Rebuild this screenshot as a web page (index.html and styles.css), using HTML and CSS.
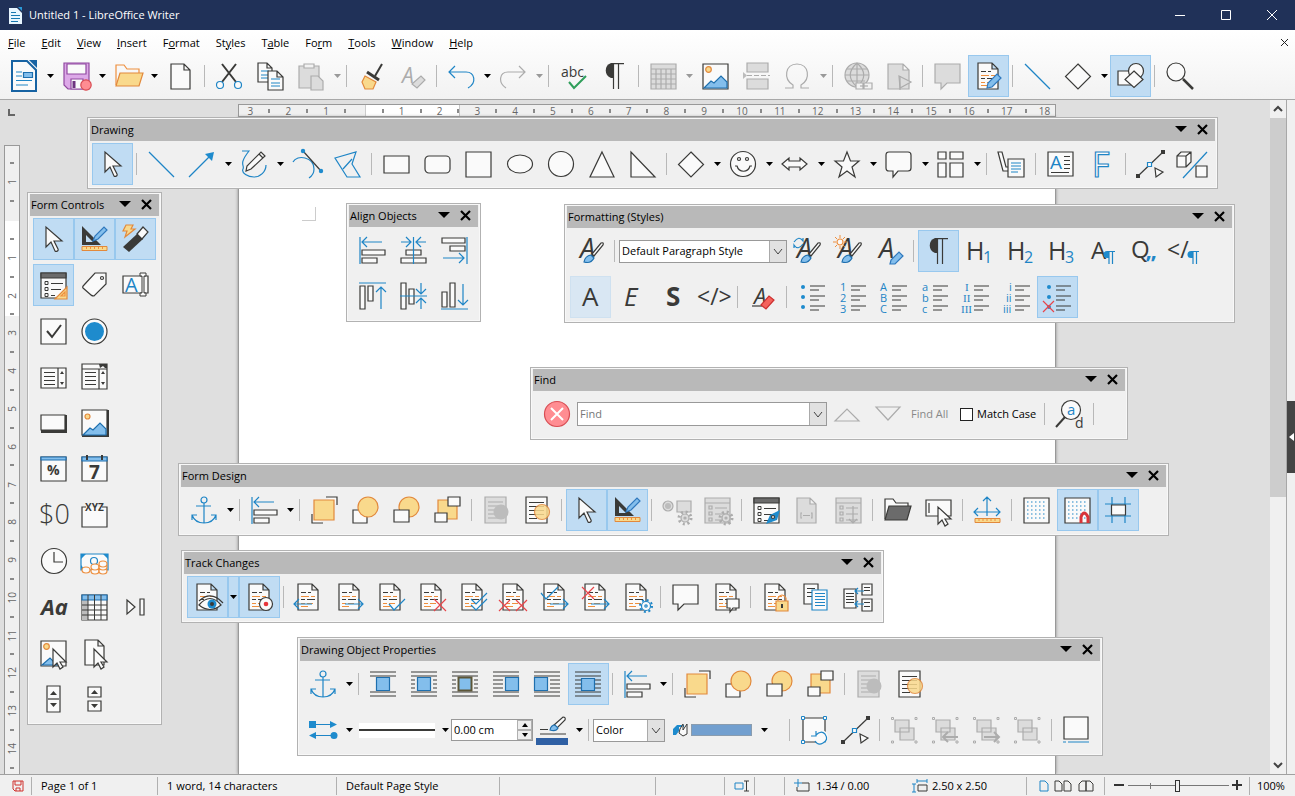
FILE: index.html
```html
<!DOCTYPE html>
<html lang="en">
<head>
<meta charset="utf-8">
<title>Untitled 1 - LibreOffice Writer</title>
<link rel="stylesheet" href="styles.css">
</head>
<body>
<svg class="defs" aria-hidden="true"><defs>
<g id="writer"><path class="navy w" d="M1-2h15l9 9v21H1z"/><path class="navyf" d="M18-3h8v8z"/><path class="b" d="M5 9h6M5 13h6M5 17.500h16M5 22h12"/><path class="bf" d="M12.500 9.500h9v5h-9z"/></g>
<g id="save"><path class="purple" d="M1 0h25v26H5l-4-4z"/><path class="purple w" d="M4 1h19v10H4zM8 16h12v10H8z"/><path class="purpled" d="M11 18v7"/><circle class="red" cx="23" cy="22" r="5.200"/></g>
<g id="open"><path class="o" d="M1 22V2h8l3 4h12v4"/><path class="of" d="M5 10h23l-4 13H1z"/></g>
<g id="doc"><path class="w" d="M4 1h13l6 6v19H4zM17 1v6h6"/></g>
<g id="cut"><path d="M6 1l14 18M20 1L6 19" stroke-width="2"/><circle class="b w" cx="4" cy="22" r="3.500"/><circle class="b w" cx="22" cy="22" r="3.500"/></g>
<g id="copy"><path class="w" d="M1 0h9l5 5v14H1zM10 0v5h5"/><path class="b" d="M4 8h8M4 12h8M4 15h8"/><path class="w" d="M11 8h9l6 6v13H11zM20 8v6h6"/><path class="b" d="M14 16h9M14 20h9M14 23h9"/></g>
<g id="paste"><path class="g" d="M1 3h20v22H1z"/><path class="g w" d="M6 5V1h10v4z"/><path class="g" d="M13 13h7l5 5v9H13z"/></g>
<g id="brush"><path d="M24 1l-7 12" stroke-width="2"/><path d="M9 9l12 8" stroke-width="3"/><path class="of" d="M7 13l11 6-3 7H7L4 19z"/></g>
<g id="clear"><text class="tg it" x="3" y="20" font-size="21">A</text><path class="g" d="M13 21l9-8 4 4-8 8z"/></g>
<g id="undo"><path class="b" d="M7 3L1 9l6 6M1 9h17c9 0 11 11 2 16"/></g>
<g id="redo"><path class="gl" d="M19 3l6 6-6 6M25 9H8C-1 9-2 20 6 25"/></g>
<g id="spell"><text class="tk" x="1" y="14" font-size="14">abc</text><path class="green" d="M9 19l5 6 12-12"/></g>
<g id="pilcrow"><path class="kf" d="M12 0h-2a8 8 0 0 0 0 15h2z"/><path d="M10 .7h13M12.500 0v26M17.500 0v26"/></g>
<g id="gtable"><path class="g" d="M1 1h25v25H1zM1 6h25M1 11h25M1 16h25M1 21h25M6 6v20M11 6v20M16 6v20M21 6v20"/></g>
<g id="image"><path class="w" d="M1 1h25v25H1z"/><circle class="of" cx="6.500" cy="6.500" r="2.800"/><path class="bf" d="M2 25l7-7 3 2 7-7 6 6v6z"/></g>
<g id="break"><path class="g" d="M4 0h21v9H4zM4 16h21v10H4z"/><path class="gl" stroke-dasharray="5 2" d="M4 12.500h23"/><path class="gf" d="M0 9l4 3.500L0 16z"/></g>
<g id="omega"><path class="gl" d="M1 25h8v-3C-1 16 1 1 13 1s14 15 4 21v3h8"/></g>
<g id="globe"><circle class="g" cx="13" cy="12" r="12"/><path class="gl" d="M1 12h24M3 6h20M3 18h18M13 0v24M13 0c-9 8-9 16 0 24M13 0c9 8 9 16 0 24"/><path class="g w" d="M12 20h7v6h-7zM20 20h8v6h-8z"/><path class="gl" d="M16 23h8"/></g>
<g id="docplay"><path class="g" d="M3 1h15l6 6v19H3zM18 1v6h6"/><path class="g" d="M14 13l12 6-11 6z"/><path class="gl" d="M15 13v14"/></g>
<g id="gcomment"><path class="g" d="M1 1h25v19H13l-6 6v-6H1z"/></g>
<g id="dl"><path class="w" d="M3 0h14l6 6v20H3zM17 0v6h6"/><path stroke-width="1" d="M6 8.500h5m2 0h3M6 15.500h4m2 0h8"/><path class="o" stroke-width="1" d="M6 12.500h8m2 0h4M6 19.500h4m2 0h6M6 22.500h7"/></g>
<g id="pencil"><path class="bp" d="M12 25l1-5 9-9 4 4-9 9z"/></g>
<g id="track"><use href="#dl"/><use href="#pencil"/></g>
<g id="line"><path class="b" d="M1 1l25 25"/></g>
<g id="diamond"><path class="w" d="M13 1l12.500 12.500L13 26 .5 13.500z"/></g>
<g id="shapes"><path class="w" d="M1 8h14v14H1z"/><circle class="w" cx="19" cy="8" r="7.500"/><path class="w" d="M17 8l9 8.500-9 8-9-8z"/></g>
<g id="search"><circle class="w" cx="10" cy="9" r="9"/><path d="M17 16l10 10" stroke-width="2.500"/></g>
<g id="select"><path class="w" d="M6 1v20l5-5 4 9c1 1 4 0 3-2l-4-8h8z"/></g>
<g id="arrow"><path class="b" d="M0 26L20 6"/><path class="bs" d="M25 1l-2 9-7-7z"/></g>
<g id="freehand"><path class="b" d="M1 0h7C-3 14 4 14 2 18s5 8 11 8 12-5 12-12"/><path class="w" d="M5 20l1-5L20 1l4 4L10 18zM18 3l4 4"/></g>
<g id="curve"><path class="b" d="M0 11C4 3 21 6 21 18c0 4-2 7-5 9"/><path d="M10 0l18 20"/><circle class="bs" cx="10" cy="0" r="2.200"/><circle class="bs" cx="28" cy="20" r="2.200"/></g>
<g id="polygon"><path class="b" d="M1 7l21-6-4 12 8 13H13zM9 18l9-10"/></g>
<g id="rect"><path class="w" d="M1 5h25v17H1z"/></g>
<g id="rrect"><rect class="w" x="1" y="5" width="25" height="17" rx="4"/></g>
<g id="square"><path class="w" d="M1 1h25v25H1z"/></g>
<g id="ellipse"><ellipse class="w" cx="14" cy="13" rx="12.500" ry="9"/></g>
<g id="circle"><circle class="w" cx="14" cy="13" r="12.500"/></g>
<g id="tri"><path class="w" d="M14 1l12 25H2z"/></g>
<g id="rtri"><path class="w" d="M2 1v25h24z"/></g>
<g id="smiley"><circle class="w" cx="13" cy="13" r="12.500"/><circle cx="9" cy="8" r="1.500"/><circle cx="17" cy="8" r="1.500"/><path d="M5 15h2c2 7 11 7 13 0h2"/></g>
<g id="dblarrow"><path class="w" d="M0 13l7-6v3h11V7l7 6-7 6v-3H7v3z"/></g>
<g id="star"><path class="w" d="M13 1l3.500 9H25l-7 6 3 10-8-6-8 6 3-10-7-6h8.500z"/></g>
<g id="callout"><path class="w" d="M3 1h19q3 0 3 3v13q0 3-3 3H12l-5 6v-6H3q-3 0-3-3V4q0-3 3-3z"/></g>
<g id="flow"><path class="w" d="M0 1h8v7H0zM12 1h13v7H12zM0 12h8v14H0zM12 12h13v14H12z"/></g>
<g id="lcall"><path class="w" d="M0 1h4l4 15h3v4H5z"/><path class="w" d="M10 8h16v18H10z"/><path class="b" d="M13 12h10M13 15h10M13 18h10M13 21h7"/></g>
<g id="textbox"><path class="w" d="M1 1h25v24H1z"/><text class="tb" x="3" y="18" font-size="19">A</text><path stroke-width="1" d="M17 5.500h6M17 9.500h6M17 13.500h6M17 17.500h6M4 21.500h18"/></g>
<g id="fontwork"><text class="tw" x="4" y="26" font-size="34">F</text></g>
<g id="points"><path d="M1 25L26 1"/><path class="kf" d="M-1 23h4v4h-4zM24-1h4v4h-4z"/><path class="b w" d="M10.500 11.500h4v4h-4z"/><path class="w" d="M18 17l8 4-7 5z"/></g>
<g id="extrude"><path class="b" d="M5 27L29 1"/><path class="w" d="M-1 5h9v11h-9zM-1 5l4-4h10v10l-5 5M8 5l5-4M18 15h11v11H18z"/></g>
<g id="design"><path class="kf" fill-rule="evenodd" d="M1 0l19 19H1zM5 9v7h7z"/><path class="bp" d="M12 15l2-5L23 1l3 3-9 9z"/><path class="of" stroke-width="1" d="M1 20.500h25v4H1z"/><path class="o" stroke-width="1" d="M5.500 21v2m4-2v2m4-2v2m4-2v2m4-2v2"/></g>
<g id="wizard"><path class="of" d="M4-1h7L9 3h4L3 11l2-6H1z"/><path class="kf" d="M1 21L15 8l6 5L7 26z"/><path class="w" d="M15 8l6-7 5 5-6 7z"/></g>
<g id="formprop"><path class="w" d="M1 1h25v25H1z"/><path class="kd" d="M1 1h25v5H1z"/><path stroke-width="1" d="M5 9.500h3v3H5zM5 15.500h3v3H5zM5 21.500h3v3H5zM11 11.500h12M11 17.500h10M11 23.500h4"/></g>
<g id="formctl"><use href="#formprop"/><path class="of" d="M15 27h12V15z"/><path class="o" d="M21 24h4v-4z"/></g>
<g id="label"><path class="w" d="M3 13L14 1h11v11L13 24q-2 0-3-1l-8-7q-1-1 1-3z"/><circle cx="21" cy="6" r="1.500"/></g>
<g id="textfield"><path class="w" d="M1 4h25v17H1z"/><text class="tb" x="3" y="20" font-size="20">A</text><path class="w" d="M18 1h6v3h-2v17h2v3h-6v-3h2V4h-2z" stroke-width="1"/></g>
<g id="check"><path class="w" d="M1 1h25v25H1z"/><path d="M7 13l5 6 9-12" stroke-width="2"/></g>
<g id="radio"><circle class="w" cx="13.500" cy="13.500" r="12.500"/><circle class="bs" cx="13.500" cy="13.500" r="9.500"/></g>
<g id="list"><path class="w" d="M1 4h25v20H1zM18 4v20"/><path stroke-width="1" d="M4 8.500h11M4 12.500h11M4 16.500h11M4 20.500h11"/><path class="kf" d="M20 10l2-3 2 3zM20 18h4l-2 3z"/></g>
<g id="combo"><path class="w" d="M1 0h25v25H1zM1 5h25M18 5v20"/><path stroke-width="1" d="M4 8.500h11M4 12.500h11M4 16.500h11M4 20.500h11"/><path class="kf" d="M20 10l2-3 2 3zM20 18h4l-2 3zM18 0h8v4h-2l-2-2-3 2z"/></g>
<g id="pbutton"><path class="kf" d="M1 5h26v18H1z"/><path class="w" d="M1 5h24v15H1z"/></g>
<g id="ibutton"><path class="kf" d="M1 0h27v27H1z"/><path class="w" d="M1 0h25v25H1z"/><circle class="of" cx="6.500" cy="6.500" r="2.500"/><path class="bf" d="M2 25l7-7 3 2 7-7 6 6v6z"/></g>
<g id="percent"><path class="w" d="M1 1h25v24H1z"/><path class="bf" d="M1 1h25v3H1z"/><text class="tk bold" x="7" y="19" font-size="14">%</text></g>
<g id="date"><path class="w" d="M1 1h25v24H1z"/><path class="bf" d="M1 1h25v4H1z"/><path d="M6-1v5M21-1v5" stroke-width="2"/><text class="tk bold" x="8" y="23" font-size="19">7</text></g>
<g id="currency"><text class="tk light" x="-1" y="22" font-size="27">$0</text></g>
<g id="group"><path class="w" d="M5 5H1v20h25V5h-5"/><text class="tk bold" x="4" y="9" font-size="10">XYZ</text></g>
<g id="clock"><circle class="w" cx="14" cy="13" r="12.500"/><path d="M14 4v10h9"/></g>
<g id="money"><path class="b w" d="M0 6h27v16H0z"/><path class="bs" d="M0 6h5l-5 5zM27 6h-5l5 5zM0 22v-5l4 5z"/><circle class="b" cx="13" cy="13" r="3.500"/><g class="o cw"><ellipse cx="5" cy="22" rx="4" ry="3"/><ellipse cx="14" cy="23" rx="4" ry="3"/><ellipse cx="14" cy="19" rx="4" ry="3"/><ellipse cx="22" cy="23" rx="4" ry="3"/><ellipse cx="22" cy="19" rx="4" ry="3"/><ellipse cx="22" cy="16" rx="4" ry="3"/></g></g>
<g id="pattern"><text class="tk bold it" x="1" y="21" font-size="22">Aa</text></g>
<g id="grid"><path class="w" d="M1 1h25v25H1z"/><path class="gf" d="M1 6h6v20H1z"/><path class="bf" d="M1 1h25v5H1z"/><path stroke-width="1" d="M1 11h25M1 16h25M1 21h25M7 1v25M13.500 1v25M20 1v25"/></g>
<g id="nav"><path class="w" d="M5 6l8 7-8 7zM18 5h4v16h-4z"/></g>
<g id="imgctl"><path class="w" d="M1 1h25v25H1z"/><circle class="of" cx="6.500" cy="6.500" r="2.800"/><path class="bf" d="M2 25l8-7 7 7z"/><path class="w" d="M13 9v18l4-4 3 6 3-2-3-5h6z"/></g>
<g id="filectl"><path class="w" d="M4 0h13l6 6v19H4zM17 0v6h6"/><path class="w" d="M13 9v18l4-4 3 6 3-2-3-5h6z"/></g>
<g id="spinbtn"><path class="w" d="M7 0h13v26H7z"/><path d="M8 13h11"/><path class="kf" d="M10 9h7l-3.500-4zM10 17h7l-3.500 4z"/></g>
<g id="scrollbtn"><path class="w" d="M7 1h13v10H7zM7 15h13v10H7z"/><path class="kf" d="M10 8h7l-3.500-4zM10 18h7l-3.500 4z"/></g>
<g id="aleft"><path class="b" d="M1 0v27M23 5H3M8 0L3 5l5 5"/><path class="w" d="M3 13h23v5H3zM3 21h15v5H3z"/></g>
<g id="acenter"><path class="w" d="M6 13h15v5H6zM1 21h25v5H1z"/><path class="b" d="M13.500 0v27M1 5h9M6 0l5 5-5 5M26 5h-9M21 0l-5 5 5 5"/></g>
<g id="aright"><path class="b" d="M26 0v27M2 21h21M18 16l5 5-5 5"/><path class="w" d="M1 1h23v5H1zM9 9h15v5H9z"/></g>
<g id="atop"><path class="b" d="M0 0h27M22 26V4M17 9l5-5 5 5"/><path class="w" d="M1 3h5v23H1zM9 3h5v15H9z"/></g>
<g id="amiddle"><path class="w" d="M1 0h5v26H1zM9 6h5v15H9z"/><path class="b" d="M0 13h27M21 0v11M16 6l5 5 5-5M21 26V16M16 20l5-5 5 5"/></g>
<g id="abottom"><path class="b" d="M0 26h27M22 1v21M17 17l5 5 5-5"/><path class="w" d="M1 9h5v15H1zM9 0h5v24H9z"/></g>
<g id="bbrush"><path class="w" d="M15 16L24 5q3-1 2 2l-9 11z"/><path class="bf" d="M7 24q1-6 7-7l3 3q-3 6-10 4z"/></g>
<g id="stylea"><text class="tk it" x="3" y="20" font-size="27">A</text></g>
<g id="style"><use href="#stylea"/><use href="#bbrush"/></g>
<g id="styleup"><use href="#stylea"/><use href="#bbrush"/><path class="b" d="M0 4q5-7 9-1V0M9 6q-5 7-9 1v3"/></g>
<g id="stylenew"><use href="#stylea"/><use href="#bbrush"/><circle class="o w" cx="5" cy="4" r="3"/><path class="o" stroke-width="1" d="M5-3v3M5 8v3M-2 4h3M9 4h3M0-1l2 2M8 7l2 2M10-1L8 1M0 9l2-2"/></g>
<g id="styleedit"><use href="#stylea"/><path class="bp" d="M14 26l1-4 8-8 4 4-8 8z"/></g>
<g id="h1"><text class="tk" x="0" y="22" font-size="25">H</text><text class="tb" x="17" y="25" font-size="16">1</text></g>
<g id="h2"><text class="tk" x="0" y="22" font-size="25">H</text><text class="tb" x="17" y="25" font-size="16">2</text></g>
<g id="h3"><text class="tk" x="0" y="22" font-size="25">H</text><text class="tb" x="17" y="25" font-size="16">3</text></g>
<g id="bpil"><path class="bs" d="M20 13h-2a3.500 3.500 0 0 0 0 7h2z"/><path class="b" d="M18 13.500h8M20 13v13M23.500 13v13"/></g>
<g id="apil"><text class="tk" x="2" y="21" font-size="24">A</text><use href="#bpil"/></g>
<g id="quote"><text class="tk" x="1" y="20" font-size="24">Q</text><text class="tb bold" x="16" y="33" font-size="22">”</text></g>
<g id="codepil"><text class="tk" x="-4" y="20" font-size="23">&lt;/</text><use href="#bpil" x="2"/></g>
<g id="ca"><text class="tk" x="5" y="22" font-size="26">A</text></g>
<g id="ce"><text class="tk it" x="6" y="22" font-size="26">E</text></g>
<g id="cs"><text class="tk bold" x="7" y="22" font-size="26">S</text></g>
<g id="code"><text class="tk" x="-3" y="21" font-size="23">&lt;/&gt;</text></g>
<g id="erase"><text class="tk it" x="5" y="20" font-size="22">A</text><path d="M3 22h10"/><path class="rf" d="M12 21l8-9 5 4-8 9z"/></g>
<g id="lines"><path d="M12 2h15M12 6h9M12 12h15M12 16h9M12 22h15M12 26h9"/></g>
<g id="bul"><use href="#lines"/><circle class="bs" cx="5" cy="3" r="2"/><circle class="bs" cx="5" cy="13" r="2"/><circle class="bs" cx="5" cy="23" r="2"/></g>
<g id="num"><use href="#lines"/><text class="tb" font-size="11"><tspan x="1" y="7">1</tspan><tspan x="1" y="18">2</tspan><tspan x="1" y="29">3</tspan></text></g>
<g id="upa"><use href="#lines"/><text class="tb" font-size="11"><tspan x="0" y="7">A</tspan><tspan x="0" y="18">B</tspan><tspan x="0" y="29">C</tspan></text></g>
<g id="lowa"><use href="#lines"/><text class="tb" font-size="11"><tspan x="1" y="7">a</tspan><tspan x="1" y="18">b</tspan><tspan x="1" y="29">c</tspan></text></g>
<g id="upi"><use href="#lines"/><text class="tb serif" font-size="11"><tspan x="3" y="7">I</tspan><tspan x="1" y="18">II</tspan><tspan x="-1" y="29">III</tspan></text></g>
<g id="lowi"><use href="#lines"/><text class="tb" font-size="11"><tspan x="6" y="7">i</tspan><tspan x="3" y="18">ii</tspan><tspan x="0" y="29">iii</tspan></text></g>
<g id="nolist"><use href="#bul"/><path class="r" d="M-1 17l11 11M10 17L-1 28"/></g>
<g id="closefind"><circle class="red" cx="14" cy="13" r="12.500"/><path class="white" d="M8 7l12 12M20 7L8 19"/></g>
<g id="up"><path class="gl" d="M1 20h24L13 8z"/></g>
<g id="down"><path class="gl" d="M1 6h24L13 19z"/></g>
<g id="findrep"><circle class="w" cx="15" cy="9" r="9.500"/><path d="M9 16L0 26" stroke-width="2"/><text class="tb" x="11" y="14" font-size="15">a</text><text class="tk" x="19" y="27" font-size="14">d</text></g>
<g id="anchor"><circle class="b" cx="13" cy="3" r="3"/><path class="b" d="M13 6v20M5 9h15M1 18q3 8 12 8t12-8M1 23v-5h5M25 23v-5h-5"/></g>
<g id="front"><path class="w" d="M15 0h11v8M1 17v9h11"/><path class="of" d="M3 3h20v20H3z"/></g>
<g id="fwd"><path class="w" d="M1 13h14v13H1z"/><circle class="of" cx="16" cy="10" r="10"/></g>
<g id="back"><circle class="of" cx="16" cy="10" r="10"/><path class="w" d="M1 13h15v12H1z"/></g>
<g id="toback"><path class="of" d="M4 3h19v19H4z"/><path class="w" d="M14 0h12v9H14zM1 16h12v9H1z"/></g>
<g id="gfore"><path class="g" d="M2 0h21v26H2z"/><path class="gl" d="M5 5h15M5 9h15M5 13h15M5 17h15M5 21h15"/><circle class="gf" cx="18" cy="15" r="7.500"/></g>
<g id="fore"><path class="w" d="M2 0h21v26H2z"/><path stroke-width="1" d="M5 5.500h15M5 9.500h15M5 13.500h15M5 17.500h15M5 21.500h8"/><circle class="of" opacity=".85" cx="18" cy="15" r="7.500"/></g>
<g id="ggear"><circle class="g" cx="22" cy="21" r="4"/><circle class="gl" stroke-dasharray="2 2.700" stroke-width="3" cx="22" cy="21" r="6"/><circle class="gl" cx="22" cy="21" r="1"/></g>
<g id="gctl"><circle class="g" cx="5" cy="9" r="5"/><circle class="gf" cx="5" cy="9" r="3"/><path class="g" d="M14 4h14v11H14z"/><use href="#ggear"/></g>
<g id="gformb"><path class="g" d="M1 1h25v25H1zM1 6h25M5 9h3v3H5zM5 15h3v3H5zM5 21h3v3H5zM11 11h12M11 17h12M11 23h12"/></g>
<g id="gform"><use href="#gformb"/><use href="#ggear"/></g>
<g id="navig"><use href="#formprop"/><path class="bs" d="M13 27l4-9 10-5-3 10z"/><circle class="w" cx="20" cy="20" r="1.500"/></g>
<g id="gdoc"><path class="g" d="M3 1h13l6 6v19H3zM16 1v6h6M8 16h-1v5h1M17 16h1v5h-1M9 18.500h7"/></g>
<g id="gsort"><use href="#gformb"/><path class="gl" d="M18 9v17M14 22l4 4 4-4"/></g>
<g id="folder"><path class="w" d="M1 22V2h8l3 4h12v4"/><path class="kd" d="M5 9h22l-4 14H1z"/></g>
<g id="autoctl"><path class="w" d="M1 3h25v16H1zM4 6v10"/><path class="w" d="M13 10v17l4-4 3 6 3-2-3-5h6z"/></g>
<g id="position"><path class="b" d="M13 0v19M0 15h26M9 4l4-4 4 4M4 11l-4 4 4 4M22 11l4 4-4 4"/><path class="of" stroke-width="1" d="M1 21.500h25v4H1z"/><path class="o" stroke-width="1" d="M5 22v2m4-2v2m4-2v2m4-2v2m4-2v2"/></g>
<g id="dots"><path class="w" d="M1 1h25v25H1z"/><path class="b" stroke-dasharray="1.500 2.500" d="M4 5h20M4 9h20M4 13h20M4 17h20M4 21h20"/></g>
<g id="snap"><use href="#dots"/><path class="mag" d="M17 26v-6q3-8 7 0v6"/></g>
<g id="guides"><path class="b" d="M7 0v26M20 0v26M0 7h26M0 19h26"/><path class="w" d="M6.500 8h14v10h-14z"/></g>
<g id="show"><use href="#dl"/><path class="w" d="M5 21q11-13 22 0-11 9-22 0z"/><path d="M5 17q12-11 24 2"/><circle class="bs" cx="18" cy="20" r="4.500"/><circle class="kf" cx="18" cy="20" r="2"/></g>
<g id="record"><use href="#dl"/><circle class="w" cx="20" cy="20" r="6.500"/><circle class="redf" cx="20" cy="20" r="2.300"/></g>
<g id="prev"><use href="#dl"/><path class="b" d="M-1 20h18M4 15l-5 5 5 5"/></g>
<g id="next"><use href="#dl"/><path class="b" d="M9 20h18M22 15l5 5-5 5"/></g>
<g id="accept"><use href="#dl"/><path class="b" d="M12 20l5 6 11-11"/></g>
<g id="reject"><use href="#dl"/><path class="r" d="M16 15l12 12M28 15L16 27"/></g>
<g id="acceptall"><use href="#dl"/><path class="b" d="M12 15l5 5L28 9M12 21l5 5 11-11"/></g>
<g id="rejectall"><use href="#dl"/><path class="r" d="M-1 16l11 11M10 16L-1 27M16 16l11 11M27 16L16 27"/></g>
<g id="acceptnext"><use href="#next"/><path class="b" d="M0 9l5 6L17 3"/></g>
<g id="rejectnext"><use href="#next"/><path class="r" d="M0 3l12 12M12 3L0 15"/></g>
<g id="manage"><use href="#dl"/><circle class="b w" cx="23" cy="22" r="4.500"/><circle class="b" stroke-width="2" stroke-dasharray="2 2.700" cx="23" cy="22" r="6"/><circle class="b" cx="23" cy="22" r="1.200"/></g>
<g id="comment"><path class="w" d="M1 1h25v19H12l-6 6v-6H1z"/></g>
<g id="doccomment"><use href="#dl"/><path class="w" d="M14 15h12v9h-6l-3 4v-4h-3z"/></g>
<g id="lock"><use href="#dl"/><path class="o" d="M16 18v-4q4-6 8 0v4"/><path class="of" d="M14 17h12v10H14z"/><path d="M20 20v4" stroke-width="2"/></g>
<g id="compare"><path class="w" d="M1 0h14v20H1z"/><path stroke-width="1" d="M4 4.500h8M4 8.500h8M4 12.500h8"/><path class="b w" d="M9 6h15v20H9z"/><path class="b" stroke-width="1" d="M12 9.500h10M12 12.500h10M12 15.500h10M12 18.500h10M12 21.500h10"/></g>
<g id="merge"><path class="w" d="M0 5h12v19H0zM18 0h10v11H18zM18 15h10v12H18z"/><path stroke-width="1" d="M2 9.500h8M2 12.500h8M2 15.500h8M2 18.500h8M20 3.500h6M20 6.500h6M20 18.500h6M20 22.500h6"/><path class="b" d="M20 7h-9M14 4l-3 3 3 3M20 20h-9M14 17l-3 3 3 3"/></g>
<g id="rows"><path d="M0 1h26M0 5h26M0 21h26M0 25h26"/></g>
<g id="wnone"><use href="#rows"/><path class="bf" d="M6.500 6.500h13v13h-13z"/></g>
<g id="wpar"><use href="#rows"/><path d="M0 9h4M0 13h4M0 17h4M22 9h4M22 13h4M22 17h4"/><path class="bf" d="M6.500 6.500h13v13h-13z"/></g>
<g id="wopt"><use href="#rows"/><path d="M0 9h4M0 13h4M0 17h4M22 9h4M22 13h4M22 17h4"/><path class="bf kb" d="M6.500 6.500h13v13h-13z"/></g>
<g id="wbefore"><use href="#rows"/><path d="M0 9h10M0 13h10M0 17h10"/><path class="bf" d="M12.500 6.500h13v13h-13z"/></g>
<g id="wafter"><use href="#rows"/><path d="M16 9h10M16 13h10M16 17h10"/><path class="bf" d="M.5 6.500h13v13H.5z"/></g>
<g id="wthrough"><path d="M0 1h26M0 5h26M0 9h26M0 13h26M0 17h26M0 21h26M0 25h26"/><path class="bf" d="M6.500 7.500h13v12h-13z"/></g>
<g id="ends"><path class="bs" d="M-1 4h7v7h-7zM20 4l7 3.500-7 3.500zM6 15l-7 3.500L6 22z"/><path class="b" d="M5 7.500h17M3 18.500h20"/><circle class="bs" cx="24" cy="18.500" r="3.500"/></g>
<g id="linecolor"><path d="M0 12.500h8M0 17h26"/><path class="w" d="M14 8L23 0q3 0 2 3l-8 8z"/><path class="bf" d="M10 13q1-5 5-5l3 3q-2 4-8 2z"/><path class="barf" d="M-4 21h32v7H-4z"/></g>
<g id="fill"><path class="bs" d="M0 8l4-4h7v2H6v4l-3 4H0z"/><path class="w" stroke-width="1" d="M7 8l3-5v6l4-6v10l-4 2-4-3z"/></g>
<g id="rotate"><path class="w" d="M2 1h22v24H2z"/><path class="b w" stroke-width="1" d="M.5-.5h3v3h-3zM22.500-.5h3v3h-3zM.5 23.500h3v3h-3z"/><circle class="w0" cx="20" cy="20" r="7"/><path class="b" d="M15 14v5h-5M15 18q5-5 9-1 4 6-2 9-5 3-8-2"/></g>
<g id="ggroup"><path class="g" d="M4 3h14v12H4zM9 11h14v12H9z"/><path class="gl" stroke-width="1" d="M.5.5h2v2h-2zM24 .5h2v2h-2zM.5 24h2v2h-2zM24 24h2v2h-2z"/></g>
<g id="genter"><use href="#ggroup"/><path class="gl" stroke-width="2" d="M26 20H11M16 15l-5 5 5 5"/></g>
<g id="gexit"><use href="#ggroup"/><path class="gl" stroke-width="2" d="M11 20h15M21 15l5 5-5 5"/></g>
<g id="shadow"><path class="w" d="M1 0h24v22H1z"/><path class="b" d="M0 25h3m2 0h21"/></g>
<g id="dda"><path class="blackf" d="M0 0h7L3.500 4z"/></g>
<g id="ddg"><path class="gf2" d="M0 0h7L3.500 4z"/></g>
<g id="tda"><path class="blackf" d="M0 0h12L6 6z"/></g>
<g id="tdx"><path class="blackx" d="M1 1l9 9M10 1L1 10"/></g>
<g id="chev"><path d="M1 1l4 5 4-5"/></g>
</defs></svg>

<header class="titlebar">
  <svg class="appicon" aria-hidden="true"><path fill="#e8f6ff" d="M0 1h8l5 5v11H0z"/><path fill="#2a9ad8" d="M9 0h4v4z"/><path stroke="#1878b0" d="M2 5.500h5M2 8.500h9M2 11.500h9M2 14.500h7"/></svg>
  <h1>Untitled 1 - LibreOffice Writer</h1>
  <div class="winbtns">
    <button aria-label="Minimize"><svg><path d="M0 5.500h10"/></svg></button>
    <button aria-label="Maximize"><svg><path d="M.5.5h9v9h-9z"/></svg></button>
    <button aria-label="Close"><svg><path d="M0 0l10 10M10 0L0 10"/></svg></button>
  </div>
</header>
<div class="chrome">
<nav class="menubar">
  <button><u>F</u>ile</button><button><u>E</u>dit</button><button><u>V</u>iew</button><button><u>I</u>nsert</button><button>F<u>o</u>rmat</button><button>St<u>y</u>les</button><button>T<u>a</u>ble</button><button>Fo<u>r</u>m</button><button><u>T</u>ools</button><button><u>W</u>indow</button><button><u>H</u>elp</button>
  <button class="closedoc" aria-label="Close document"><svg><path d="M1 1l7 7M8 1L1 8"/></svg></button>
</nav>
<div class="bar main" role="toolbar" aria-label="Standard">
  <button class="btn" title="New"><svg class="ico"><use href="#writer"/></svg></button><button class="dd" title="New options"><svg><use href="#dda"/></svg></button>
  <button class="btn" title="Save"><svg class="ico"><use href="#save"/></svg></button><button class="dd" title="Save options"><svg><use href="#dda"/></svg></button>
  <button class="btn" title="Open"><svg class="ico"><use href="#open"/></svg></button><button class="dd" title="Open options"><svg><use href="#dda"/></svg></button>
  <button class="btn" title="Blank document"><svg class="ico"><use href="#doc"/></svg></button><i class="sep"></i>
  <button class="btn" title="Cut"><svg class="ico"><use href="#cut"/></svg></button>
  <button class="btn" title="Copy"><svg class="ico"><use href="#copy"/></svg></button>
  <button class="btn" title="Paste"><svg class="ico"><use href="#paste"/></svg></button><button class="dd" title="Paste options"><svg><use href="#ddg"/></svg></button><i class="sep"></i>
  <button class="btn" title="Clone formatting"><svg class="ico"><use href="#brush"/></svg></button>
  <button class="btn" title="Clear formatting"><svg class="ico"><use href="#clear"/></svg></button><i class="sep"></i>
  <button class="btn" title="Undo"><svg class="ico"><use href="#undo"/></svg></button><button class="dd" title="Undo list"><svg><use href="#dda"/></svg></button>
  <button class="btn" title="Redo"><svg class="ico"><use href="#redo"/></svg></button><button class="dd" title="Redo list"><svg><use href="#ddg"/></svg></button><i class="sep"></i>
  <button class="btn" title="Spelling"><svg class="ico"><use href="#spell"/></svg></button>
  <button class="btn" title="Formatting marks"><svg class="ico"><use href="#pilcrow"/></svg></button><i class="sep"></i>
  <button class="btn" title="Insert table"><svg class="ico"><use href="#gtable"/></svg></button><button class="dd" title="Table size"><svg><use href="#ddg"/></svg></button>
  <button class="btn" title="Insert image"><svg class="ico"><use href="#image"/></svg></button>
  <button class="btn" title="Insert page break"><svg class="ico"><use href="#break"/></svg></button>
  <button class="btn" title="Special character"><svg class="ico"><use href="#omega"/></svg></button><button class="dd" title="Characters"><svg><use href="#ddg"/></svg></button><i class="sep"></i>
  <button class="btn" title="Hyperlink"><svg class="ico"><use href="#globe"/></svg></button>
  <button class="btn" title="Cross-reference"><svg class="ico"><use href="#docplay"/></svg></button><i class="sep"></i>
  <button class="btn" title="Comment"><svg class="ico"><use href="#gcomment"/></svg></button>
  <button class="btn on" title="Track changes functions"><svg class="ico"><use href="#track"/></svg></button><i class="sep"></i>
  <button class="btn" title="Line"><svg class="ico"><use href="#line"/></svg></button>
  <button class="btn" title="Basic shapes"><svg class="ico"><use href="#diamond"/></svg></button><button class="dd" title="More shapes"><svg><use href="#dda"/></svg></button>
  <button class="btn on" title="Draw functions"><svg class="ico"><use href="#shapes"/></svg></button><i class="sep"></i>
  <button class="btn" title="Find and replace"><svg class="ico"><use href="#search"/></svg></button>
</div>
</div>

<main class="workspace">
  <div class="vside">
    <svg class="corner" aria-hidden="true"><path d="M1 0v6h6"/></svg>
    <div class="vruler"><div class="vscale"><i></i><b>1</b><i></i><b></b><i></i><b>1</b><i></i><b>2</b><i></i><b>3</b><i></i><b>4</b><i></i><b>5</b><i></i><b>6</b><i></i><b>7</b><i></i><b>8</b><i></i><b>9</b><i></i><b>10</b><i></i><b>11</b><i></i><b>12</b><i></i><b>13</b><i></i><b>14</b><i></i></div></div>
  </div>
  <div class="canvas">
    <div class="hruler"><b>3</b><i></i><b>2</b><i></i><b>1</b><i></i><b></b><i></i><b>1</b><i></i><b>2</b><i></i><b>3</b><i></i><b>4</b><i></i><b>5</b><i></i><b>6</b><i></i><b>7</b><i></i><b>8</b><i></i><b>9</b><i></i><b>10</b><i></i><b>11</b><i></i><b>12</b><i></i><b>13</b><i></i><b>14</b><i></i><b>15</b><i></i><b>16</b><i></i><b>17</b><i></i><b>18</b></div>
    <div class="page"><div class="margin-mark"></div></div>
  </div>
  <div class="scroll"><button aria-label="Scroll up"><svg><path d="M1 6l4-4 4 4"/></svg></button><div class="thumb"></div><button aria-label="Scroll down"><svg><path d="M1 2l4 4 4-4"/></svg></button></div>
  <div class="side"><button aria-label="Show sidebar"><svg><path d="M6 0v8L1 4z"/></svg></button></div>

  <section class="panel drawing">
    <header><h2>Drawing</h2><button aria-label="Menu"><svg><use href="#tda"/></svg></button><button aria-label="Close"><svg><use href="#tdx"/></svg></button></header>
    <div class="bar">
      <button class="btn on" title="Select"><svg class="ico"><use href="#select"/></svg></button><i class="sep"></i>
      <button class="btn" title="Line"><svg class="ico"><use href="#line"/></svg></button>
      <button class="btn" title="Arrow"><svg class="ico"><use href="#arrow"/></svg></button><button class="dd" title="Lines"><svg><use href="#dda"/></svg></button>
      <button class="btn" title="Freeform"><svg class="ico"><use href="#freehand"/></svg></button><button class="dd" title="Curves"><svg><use href="#dda"/></svg></button>
      <button class="btn" title="Curve"><svg class="ico"><use href="#curve"/></svg></button>
      <button class="btn" title="Polygon"><svg class="ico"><use href="#polygon"/></svg></button><i class="sep"></i>
      <button class="btn" title="Rectangle"><svg class="ico"><use href="#rect"/></svg></button>
      <button class="btn" title="Rounded rectangle"><svg class="ico"><use href="#rrect"/></svg></button>
      <button class="btn" title="Square"><svg class="ico"><use href="#square"/></svg></button>
      <button class="btn" title="Ellipse"><svg class="ico"><use href="#ellipse"/></svg></button>
      <button class="btn" title="Circle"><svg class="ico"><use href="#circle"/></svg></button>
      <button class="btn" title="Triangle"><svg class="ico"><use href="#tri"/></svg></button>
      <button class="btn" title="Right triangle"><svg class="ico"><use href="#rtri"/></svg></button><i class="sep"></i>
      <button class="btn" title="Basic shapes"><svg class="ico"><use href="#diamond"/></svg></button><button class="dd" title="More"><svg><use href="#dda"/></svg></button>
      <button class="btn" title="Symbol shapes"><svg class="ico"><use href="#smiley"/></svg></button><button class="dd" title="More"><svg><use href="#dda"/></svg></button>
      <button class="btn" title="Block arrows"><svg class="ico"><use href="#dblarrow"/></svg></button><button class="dd" title="More"><svg><use href="#dda"/></svg></button>
      <button class="btn" title="Stars"><svg class="ico"><use href="#star"/></svg></button><button class="dd" title="More"><svg><use href="#dda"/></svg></button>
      <button class="btn" title="Callouts"><svg class="ico"><use href="#callout"/></svg></button><button class="dd" title="More"><svg><use href="#dda"/></svg></button>
      <button class="btn" title="Flowchart"><svg class="ico"><use href="#flow"/></svg></button><button class="dd" title="More"><svg><use href="#dda"/></svg></button><i class="sep"></i>
      <button class="btn" title="Line callout"><svg class="ico"><use href="#lcall"/></svg></button><i class="sep"></i>
      <button class="btn" title="Text box"><svg class="ico"><use href="#textbox"/></svg></button>
      <button class="btn" title="Fontwork"><svg class="ico"><use href="#fontwork"/></svg></button><i class="sep"></i>
      <button class="btn" title="Points"><svg class="ico"><use href="#points"/></svg></button>
      <button class="btn" title="Extrusion"><svg class="ico"><use href="#extrude"/></svg></button>
    </div>
  </section>

  <section class="panel controls">
    <header><h2>Form Controls</h2><button aria-label="Menu"><svg><use href="#tda"/></svg></button><button aria-label="Close"><svg><use href="#tdx"/></svg></button></header>
    <div class="bar grid3">
      <button class="btn on" title="Select"><svg class="ico"><use href="#select"/></svg></button>
      <button class="btn on" title="Design mode"><svg class="ico"><use href="#design"/></svg></button>
      <button class="btn on" title="Wizards"><svg class="ico"><use href="#wizard"/></svg></button>
      <button class="btn on" title="Form design"><svg class="ico"><use href="#formctl"/></svg></button>
      <button class="btn" title="Label"><svg class="ico"><use href="#label"/></svg></button>
      <button class="btn" title="Text box"><svg class="ico"><use href="#textfield"/></svg></button>
      <button class="btn first" title="Check box"><svg class="ico"><use href="#check"/></svg></button>
      <button class="btn" title="Option button"><svg class="ico"><use href="#radio"/></svg></button>
      <button class="btn first" title="List box"><svg class="ico"><use href="#list"/></svg></button>
      <button class="btn" title="Combo box"><svg class="ico"><use href="#combo"/></svg></button>
      <button class="btn first" title="Push button"><svg class="ico"><use href="#pbutton"/></svg></button>
      <button class="btn" title="Image button"><svg class="ico"><use href="#ibutton"/></svg></button>
      <button class="btn first" title="Formatted field"><svg class="ico"><use href="#percent"/></svg></button>
      <button class="btn" title="Date field"><svg class="ico"><use href="#date"/></svg></button>
      <button class="btn first" title="Numeric field"><svg class="ico"><use href="#currency"/></svg></button>
      <button class="btn" title="Group box"><svg class="ico"><use href="#group"/></svg></button>
      <button class="btn first" title="Time field"><svg class="ico"><use href="#clock"/></svg></button>
      <button class="btn" title="Currency field"><svg class="ico"><use href="#money"/></svg></button>
      <button class="btn first" title="Pattern field"><svg class="ico"><use href="#pattern"/></svg></button>
      <button class="btn" title="Table control"><svg class="ico"><use href="#grid"/></svg></button>
      <button class="btn" title="Navigation bar"><svg class="ico"><use href="#nav"/></svg></button>
      <button class="btn first" title="Image control"><svg class="ico"><use href="#imgctl"/></svg></button>
      <button class="btn" title="File selection"><svg class="ico"><use href="#filectl"/></svg></button>
      <button class="btn first" title="Spin button"><svg class="ico"><use href="#spinbtn"/></svg></button>
      <button class="btn" title="Scrollbar"><svg class="ico"><use href="#scrollbtn"/></svg></button>
    </div>
  </section>

  <section class="panel align">
    <header><h2>Align Objects</h2><button aria-label="Menu"><svg><use href="#tda"/></svg></button><button aria-label="Close"><svg><use href="#tdx"/></svg></button></header>
    <div class="bar grid3">
      <button class="btn" title="Left"><svg class="ico"><use href="#aleft"/></svg></button>
      <button class="btn" title="Centered"><svg class="ico"><use href="#acenter"/></svg></button>
      <button class="btn" title="Right"><svg class="ico"><use href="#aright"/></svg></button>
      <button class="btn" title="Top"><svg class="ico"><use href="#atop"/></svg></button>
      <button class="btn" title="Middle"><svg class="ico"><use href="#amiddle"/></svg></button>
      <button class="btn" title="Bottom"><svg class="ico"><use href="#abottom"/></svg></button>
    </div>
  </section>

  <section class="panel formatting">
    <header><h2>Formatting (Styles)</h2><button aria-label="Menu"><svg><use href="#tda"/></svg></button><button aria-label="Close"><svg><use href="#tdx"/></svg></button></header>
    <div class="bar">
      <button class="btn" title="Styles"><svg class="ico"><use href="#style"/></svg></button><i class="sep"></i>
      <span class="pick wide"><select aria-label="Paragraph style"><option>Default Paragraph Style</option></select><svg><use href="#chev"/></svg></span>
      <button class="btn" title="Update style"><svg class="ico"><use href="#styleup"/></svg></button>
      <button class="btn" title="New style"><svg class="ico"><use href="#stylenew"/></svg></button>
      <button class="btn" title="Edit style"><svg class="ico"><use href="#styleedit"/></svg></button><i class="sep"></i>
      <button class="btn on" title="Default paragraph"><svg class="ico"><use href="#pilcrow"/></svg></button>
      <button class="btn" title="Heading 1"><svg class="ico"><use href="#h1"/></svg></button>
      <button class="btn" title="Heading 2"><svg class="ico"><use href="#h2"/></svg></button>
      <button class="btn" title="Heading 3"><svg class="ico"><use href="#h3"/></svg></button>
      <button class="btn" title="Title"><svg class="ico"><use href="#apil"/></svg></button>
      <button class="btn" title="Quotation"><svg class="ico"><use href="#quote"/></svg></button>
      <button class="btn" title="Preformatted"><svg class="ico"><use href="#codepil"/></svg></button>
    </div>
    <div class="bar">
      <button class="btn soft" title="Default character"><svg class="ico"><use href="#ca"/></svg></button>
      <button class="btn" title="Emphasis"><svg class="ico"><use href="#ce"/></svg></button>
      <button class="btn" title="Strong"><svg class="ico"><use href="#cs"/></svg></button>
      <button class="btn" title="Source text"><svg class="ico"><use href="#code"/></svg></button><i class="sep"></i>
      <button class="btn" title="Clear"><svg class="ico"><use href="#erase"/></svg></button><i class="sep"></i>
      <button class="btn" title="Bullets"><svg class="ico"><use href="#bul"/></svg></button>
      <button class="btn" title="Numbers"><svg class="ico"><use href="#num"/></svg></button>
      <button class="btn" title="Uppercase letters"><svg class="ico"><use href="#upa"/></svg></button>
      <button class="btn" title="Lowercase letters"><svg class="ico"><use href="#lowa"/></svg></button>
      <button class="btn" title="Uppercase Roman"><svg class="ico"><use href="#upi"/></svg></button>
      <button class="btn" title="Lowercase Roman"><svg class="ico"><use href="#lowi"/></svg></button>
      <button class="btn on" title="No list"><svg class="ico"><use href="#nolist"/></svg></button>
    </div>
  </section>

  <section class="panel find">
    <header><h2>Find</h2><button aria-label="Menu"><svg><use href="#tda"/></svg></button><button aria-label="Close"><svg><use href="#tdx"/></svg></button></header>
    <div class="bar">
      <button class="btn" title="Close find bar"><svg class="ico"><use href="#closefind"/></svg></button>
      <span class="findbox"><input type="text" aria-label="Find text" placeholder="Find"><button aria-label="Search history"><svg><use href="#chev"/></svg></button></span>
      <button class="btn" title="Find previous"><svg class="ico"><use href="#up"/></svg></button>
      <button class="btn" title="Find next"><svg class="ico"><use href="#down"/></svg></button>
      <button class="findall">Find All</button>
      <label class="match"><input type="checkbox">Match Case</label><i class="sep"></i>
      <button class="btn" title="Find and replace"><svg class="ico"><use href="#findrep"/></svg></button><i class="sep"></i>
    </div>
  </section>

  <section class="panel design">
    <header><h2>Form Design</h2><button aria-label="Menu"><svg><use href="#tda"/></svg></button><button aria-label="Close"><svg><use href="#tdx"/></svg></button></header>
    <div class="bar">
      <button class="btn" title="Anchor"><svg class="ico"><use href="#anchor"/></svg></button><button class="dd" title="Anchors"><svg><use href="#dda"/></svg></button><i class="sep"></i>
      <button class="btn" title="Align"><svg class="ico"><use href="#aleft"/></svg></button><button class="dd" title="Alignments"><svg><use href="#dda"/></svg></button><i class="sep"></i>
      <button class="btn" title="Bring to front"><svg class="ico"><use href="#front"/></svg></button>
      <button class="btn" title="Forward one"><svg class="ico"><use href="#fwd"/></svg></button>
      <button class="btn" title="Back one"><svg class="ico"><use href="#back"/></svg></button>
      <button class="btn" title="Send to back"><svg class="ico"><use href="#toback"/></svg></button><i class="sep"></i>
      <button class="btn" title="To foreground"><svg class="ico"><use href="#gfore"/></svg></button>
      <button class="btn" title="To background"><svg class="ico"><use href="#fore"/></svg></button><i class="sep"></i>
      <button class="btn on" title="Select"><svg class="ico"><use href="#select"/></svg></button>
      <button class="btn on" title="Design mode"><svg class="ico"><use href="#design"/></svg></button><i class="sep"></i>
      <button class="btn" title="Control properties"><svg class="ico"><use href="#gctl"/></svg></button>
      <button class="btn" title="Form properties"><svg class="ico"><use href="#gform"/></svg></button><i class="sep"></i>
      <button class="btn" title="Form navigator"><svg class="ico"><use href="#navig"/></svg></button>
      <button class="btn" title="Add field"><svg class="ico"><use href="#gdoc"/></svg></button>
      <button class="btn" title="Activation order"><svg class="ico"><use href="#gsort"/></svg></button><i class="sep"></i>
      <button class="btn" title="Open in design mode"><svg class="ico"><use href="#folder"/></svg></button>
      <button class="btn" title="Automatic focus"><svg class="ico"><use href="#autoctl"/></svg></button><i class="sep"></i>
      <button class="btn" title="Position and size"><svg class="ico"><use href="#position"/></svg></button><i class="sep"></i>
      <button class="btn" title="Display grid"><svg class="ico"><use href="#dots"/></svg></button>
      <button class="btn on" title="Snap to grid"><svg class="ico"><use href="#snap"/></svg></button>
      <button class="btn on" title="Helplines"><svg class="ico"><use href="#guides"/></svg></button>
    </div>
  </section>

  <section class="panel changes">
    <header><h2>Track Changes</h2><button aria-label="Menu"><svg><use href="#tda"/></svg></button><button aria-label="Close"><svg><use href="#tdx"/></svg></button></header>
    <div class="bar">
      <button class="btn on" title="Show"><svg class="ico"><use href="#show"/></svg></button><button class="dd on" title="Show options"><svg><use href="#dda"/></svg></button>
      <button class="btn on" title="Record"><svg class="ico"><use href="#record"/></svg></button><i class="sep"></i>
      <button class="btn" title="Previous"><svg class="ico"><use href="#prev"/></svg></button>
      <button class="btn" title="Next"><svg class="ico"><use href="#next"/></svg></button>
      <button class="btn" title="Accept"><svg class="ico"><use href="#accept"/></svg></button>
      <button class="btn" title="Reject"><svg class="ico"><use href="#reject"/></svg></button>
      <button class="btn" title="Accept all"><svg class="ico"><use href="#acceptall"/></svg></button>
      <button class="btn" title="Reject all"><svg class="ico"><use href="#rejectall"/></svg></button>
      <button class="btn" title="Accept and next"><svg class="ico"><use href="#acceptnext"/></svg></button>
      <button class="btn" title="Reject and next"><svg class="ico"><use href="#rejectnext"/></svg></button>
      <button class="btn" title="Manage"><svg class="ico"><use href="#manage"/></svg></button><i class="sep"></i>
      <button class="btn" title="Insert comment"><svg class="ico"><use href="#comment"/></svg></button>
      <button class="btn" title="Change comment"><svg class="ico"><use href="#doccomment"/></svg></button><i class="sep"></i>
      <button class="btn" title="Protect"><svg class="ico"><use href="#lock"/></svg></button>
      <button class="btn" title="Compare"><svg class="ico"><use href="#compare"/></svg></button>
      <button class="btn" title="Merge"><svg class="ico"><use href="#merge"/></svg></button>
    </div>
  </section>

  <section class="panel props">
    <header><h2>Drawing Object Properties</h2><button aria-label="Menu"><svg><use href="#tda"/></svg></button><button aria-label="Close"><svg><use href="#tdx"/></svg></button></header>
    <div class="bar">
      <button class="btn" title="Anchor"><svg class="ico"><use href="#anchor"/></svg></button><button class="dd" title="Anchors"><svg><use href="#dda"/></svg></button><i class="sep"></i>
      <button class="btn" title="Wrap none"><svg class="ico"><use href="#wnone"/></svg></button>
      <button class="btn" title="Wrap parallel"><svg class="ico"><use href="#wpar"/></svg></button>
      <button class="btn" title="Wrap optimal"><svg class="ico"><use href="#wopt"/></svg></button>
      <button class="btn" title="Wrap before"><svg class="ico"><use href="#wbefore"/></svg></button>
      <button class="btn" title="Wrap after"><svg class="ico"><use href="#wafter"/></svg></button>
      <button class="btn on" title="Wrap through"><svg class="ico"><use href="#wthrough"/></svg></button><i class="sep"></i>
      <button class="btn" title="Align"><svg class="ico"><use href="#aleft"/></svg></button><button class="dd" title="Alignments"><svg><use href="#dda"/></svg></button><i class="sep"></i>
      <button class="btn" title="Bring to front"><svg class="ico"><use href="#front"/></svg></button>
      <button class="btn" title="Forward one"><svg class="ico"><use href="#fwd"/></svg></button>
      <button class="btn" title="Back one"><svg class="ico"><use href="#back"/></svg></button>
      <button class="btn" title="Send to back"><svg class="ico"><use href="#toback"/></svg></button><i class="sep"></i>
      <button class="btn" title="To foreground"><svg class="ico"><use href="#gfore"/></svg></button>
      <button class="btn" title="To background"><svg class="ico"><use href="#fore"/></svg></button>
    </div>
    <div class="bar">
      <button class="btn" title="Line ends"><svg class="ico"><use href="#ends"/></svg></button><button class="dd" title="Arrow styles"><svg><use href="#dda"/></svg></button>
      <button class="linestyle" title="Line style"><i></i></button><button class="dd" title="Line styles"><svg><use href="#dda"/></svg></button>
      <span class="spin"><input type="text" aria-label="Line width" value="0.00 cm"><span><button aria-label="Increase"><svg><path d="M0 4h6L3 0z"/></svg></button><button aria-label="Decrease"><svg><path d="M0 0h6L3 4z"/></svg></button></span></span>
      <button class="btn" title="Line color"><svg class="ico"><use href="#linecolor"/></svg></button><button class="dd" title="Line colors"><svg><use href="#dda"/></svg></button><i class="sep"></i>
      <span class="pick"><select aria-label="Area style"><option>Color</option></select><svg><use href="#chev"/></svg></span>
      <button class="fillbtn" title="Fill color"><svg class="ico"><use href="#fill"/></svg><i></i></button><button class="dd" title="Fill colors"><svg><use href="#dda"/></svg></button><i class="sep far"></i>
      <button class="btn" title="Rotate"><svg class="ico"><use href="#rotate"/></svg></button>
      <button class="btn" title="Points"><svg class="ico"><use href="#points"/></svg></button><i class="sep"></i>
      <button class="btn" title="Group"><svg class="ico"><use href="#ggroup"/></svg></button>
      <button class="btn" title="Enter group"><svg class="ico"><use href="#genter"/></svg></button>
      <button class="btn" title="Exit group"><svg class="ico"><use href="#gexit"/></svg></button>
      <button class="btn" title="Ungroup"><svg class="ico"><use href="#ggroup"/></svg></button><i class="sep"></i>
      <button class="btn" title="Caption"><svg class="ico"><use href="#shadow"/></svg></button>
    </div>
  </section>
</main>

<footer class="status">
  <span class="s-save"><svg width="12" height="12"><path class="rs" d="M1 1h10v10H3L1 9zM3 1v4h6V1M4 11V8h4v3"/></svg></span>
  <span class="s-page">Page 1 of 1</span>
  <span class="s-words">1 word, 14 characters</span>
  <span class="s-style">Default Page Style</span>
  <span class="s-lang"></span>
  <span class="s-a"></span>
  <span class="s-ins"><svg width="16" height="12"><path class="b" d="M1 3h8v6H1z"/><path class="k" d="M10 1h5M10 11h5M12.500 1v10"/></svg></span>
  <span class="s-b"></span>
  <span class="s-pos"><svg width="16" height="14"><path class="b" d="M4 0v8M0 4h8"/><path class="k" d="M8 4h7v8H3V8"/></svg>1.34 / 0.00</span>
  <span class="s-size"><svg width="16" height="14"><path class="b" d="M2 5v8M0 5h4M0 13h4M5 2h10M5 0v4M15 0v4"/><path class="k" d="M6 6h9v6H6z"/></svg>2.50 x 2.50</span>
  <span class="s-views"><svg width="55" height="12"><path class="b" d="M1 1h5l3 3v7H1z"/><path class="k" d="M16 1h4l3 3v7h-7zM25 1h4l3 3v7h-7zM47 1v10h-7V4l3-3zM47 1v10h7V4l-3-3z"/></svg></span>
  <span class="s-zoom"><button aria-label="Zoom out"><svg><path d="M0 5h10"/></svg></button><input type="range" aria-label="Zoom" min="0" max="100" value="49"><button aria-label="Zoom in"><svg><path d="M0 5h10M5 0v10"/></svg></button></span>
  <span class="s-pct">100%</span>
</footer>
</body>
</html>
```
FILE: styles.css
```css
* { box-sizing: border-box; }
body { margin: 0; min-height: 100vh; display: flex; flex-direction: column; font: 11px/16px "Open Sans", "Noto Sans", sans-serif; color: #000; background: #dfdfdf; overflow: hidden; }
button, input, select { font: inherit; color: inherit; margin: 0; padding: 0; border: 0; border-radius: 0; background: none; }
h1, h2 { margin: 0; font: inherit; }
.defs { position: absolute; width: 0; height: 0; }

/* Title bar and menus */
.titlebar { height: 30px; display: flex; align-items: center; background: #203158; color: #fff; padding-left: 9px; }
.appicon { width: 13px; height: 17px; margin-right: 7px; fill: none; }
.winbtns { margin-left: auto; display: flex; }
.winbtns button { width: 46px; height: 30px; display: grid; place-items: center; }
.winbtns svg { width: 10px; height: 10px; fill: none; stroke: #fff; overflow: visible; }
.chrome { background: linear-gradient(#fff, #f2f2f2); }
.menubar { height: 25px; display: flex; align-items: center; }
.menubar button { padding: 0 8px; }
.menubar .closedoc { margin-left: auto; padding: 0 6px; display: flex; }
.closedoc svg { width: 9px; height: 9px; fill: none; stroke: #222; }

/* Toolbars */
.bar { display: flex; align-items: center; height: 42px; }
.main { height: 44px; padding: 0 0 2px 4px; }
.btn { flex: none; width: 41px; height: 42px; padding: 8px 8px 8px 7px; display: block; }
.ico { display: block; width: 26px; height: 26px; overflow: visible; fill: none; stroke: #3a3a38; stroke-width: 1.2; }
.on { background: #c0dcf3; box-shadow: inset 0 0 0 1px #98c8ee; }
.soft { background: #d9e7f3; box-shadow: inset 0 0 0 1px #cfe1f0; }
.dd { flex: none; width: 11px; height: 42px; display: grid; place-items: center; }
.dd svg { width: 7px; height: 4px; overflow: visible; }
.sep { flex: none; width: 8px; height: 22px; background: linear-gradient(#b8b8b8, #b8b8b8) 3px 0 / 1px 100% no-repeat; }

/* Icon paint */
.w { fill: #fafafa; }
.w0 { fill: #fafafa; stroke: none; }
.b { stroke: #1e85c6; }
.bs { fill: #1e8bcd; stroke: none; }
.bf { fill: #83beec; stroke: #1e6fae; }
.bp { fill: #83beec; stroke: #2f78bd; }
.kb { stroke: #5c5638; stroke-width: 2; }
.o { stroke: #ee8f3e; }
.of { fill: #f9d98c; stroke: #e2893c; }
.cw { fill: #fafafa; }
.g { fill: #dcdcdc; stroke: #acacac; }
.g.w { fill: #f2f2f2; }
.gl { stroke: #acacac; }
.gf { fill: #bcbcbc; stroke: none; }
.gf2 { fill: #999; }
.kf { fill: #3a3a38; stroke: none; }
.kd { fill: #6b6b6b; }
.r { stroke: #e8454a; }
.rf { fill: #f4625c; stroke: #cc2f2f; }
.red { fill: #ff8d92; stroke: #d84d53; }
.redf { fill: #e8353a; stroke: none; }
.white { stroke: #fff; stroke-width: 2; }
.green { stroke: #2f9e5a; stroke-width: 2; }
.navy { stroke: #1763a3; stroke-width: 2; }
.navyf { fill: #1763a3; stroke: none; }
.purple { fill: #dda9e8; stroke: #9048a0; }
.purple.w { fill: #fafafa; }
.purpled { stroke: #6e3480; stroke-width: 3; }
.mag { stroke: #d8343a; stroke-width: 3; }
.barf { fill: #2f60a4; stroke: none; }
.blackf { fill: #000; }
.blackx { fill: none; stroke: #000; stroke-width: 2.2; }
.tk, .tb, .tg { stroke: none; fill: #3a3a38; }
.tb { fill: #1e85c6; }
.tg { fill: #acacac; }
.tw { fill: #fafafa; stroke: #1e85c6; }
.it { font-style: italic; }
.bold { font-weight: 700; }
.light { font-weight: 300; }
.serif { font-family: "Liberation Serif", serif; }

/* Work area */
.workspace { flex: 1; position: relative; display: flex; border-top: 1px solid #a8a8a8; background: #dfdfdf; overflow: hidden; }
.vside { width: 20px; display: flex; flex-direction: column; }
.corner { width: 8px; height: 8px; margin: 9px 0 28px 8px; fill: none; stroke: #666; stroke-width: 2; }
.vruler { flex: 1; width: 16px; margin-left: 4px; display: flex; border: 1px solid #999; border-bottom: 0; background: linear-gradient(#f0f0f0 75px, #fff 75px, #fff 170px, #f0f0f0 170px); }
.vscale { flex: 1; display: grid; grid-auto-rows: 1fr; margin: 8px 0 -3px; }
.hruler b, .vscale b, .hruler i, .vscale i { place-self: center; font: 10px/12px "Open Sans", sans-serif; color: #666; min-height: 0; }
.vscale b { writing-mode: vertical-rl; transform: rotate(180deg); }
.hruler i { width: 2px; height: 4px; background: #8a8a8a; }
.vscale i { width: 4px; height: 2px; background: #8a8a8a; }
.canvas { flex: 1; display: flex; flex-direction: column; padding: 4px 214px 0 218px; }
.hruler { height: 13px; display: grid; grid-auto-flow: column; grid-template-columns: repeat(43, minmax(0, 1fr)); padding: 0 1px 0 2px; border: 1px solid #999; background: linear-gradient(90deg, #f0f0f0 126px, #999 126px, #fff 127px, #fff 220px, #999 220px, #f0f0f0 221px); }
.hruler b { width: 14px; text-align: center; }
.page { flex: 1; background: #fff; border: solid #999; border-width: 0 1px; box-shadow: 0 0 3px #888; }
.margin-mark { width: 14px; height: 14px; margin: 90px 0 0 63px; border: solid #ccc; border-width: 0 1px 1px 0; }
.scroll { width: 16px; display: flex; flex-direction: column; background: #f0f0f0; }
.scroll button { height: 18px; display: grid; place-items: center; }
.scroll svg { width: 10px; height: 8px; fill: none; stroke: #444; stroke-width: 2; }
.thumb { height: 379px; margin-bottom: auto; background: #cdcdcd; }
.side { width: 9px; display: flex; align-items: center; background: #f0f0f0; border-left: 1px solid #a8a8a8; }
.side button { width: 8px; height: 72px; background: #444; display: grid; place-items: center; }
.side svg { width: 6px; height: 8px; fill: #fff; }

/* Floating toolbars */
.panel { position: absolute; border: 1px solid #b2b2b2; padding: 1px 1px 4px; background: #f0f0f0; box-shadow: inset 0 0 0 1px #f8f8f8; }
.panel > header { height: 22px; margin: 0 1px 2px; padding: 0 6px 0 1px; display: flex; align-items: center; gap: 10px; background: #b9b9b9; }
.panel h2 { flex: 1; white-space: nowrap; }
.panel header button { width: 12px; height: 14px; padding-bottom: 2px; display: grid; place-items: center; }
.panel header svg { width: 12px; height: 11px; overflow: visible; }
.panel header button:first-of-type svg { height: 6px; }
.panel .bar { padding-left: 4px; }
.panel .bar + .bar { margin-top: 4px; }
.panel .grid3 { display: grid; grid-template-columns: repeat(3, 41px); row-gap: 4px; height: auto; }
.first { grid-column: 1; }
.drawing { left: 87px; top: 17px; width: 1131px; padding-bottom: 3px; }
.drawing .bar { padding-left: 3px; }
.controls { left: 27px; top: 92px; width: 135px; }
.align { left: 346px; top: 103px; width: 135px; }
.formatting { left: 564px; top: 104px; width: 671px; }
.find { left: 530px; top: 267px; width: 598px; }
.design { left: 178px; top: 363px; width: 991px; }
.changes { left: 181px; top: 450px; width: 703px; }
.props { left: 297px; top: 537px; width: 806px; }

/* Fields */
.pick { display: grid; width: 72px; height: 23px; border: 1px solid #999; background: #fff; }
.pick select { grid-area: 1 / 1; appearance: none; padding-left: 2px; width: 100%; }
.pick svg { grid-area: 1 / 1; justify-self: end; width: 17px; height: 21px; padding: 7px 3px; background: #e1e1e1; border-left: 1px solid #aaa; fill: none; stroke: #444; pointer-events: none; overflow: visible; }
.wide { width: 168px; }
.findbox { display: flex; width: 250px; height: 24px; border: 1px solid #999; background: #fff; }
.findbox input { flex: 1; min-width: 0; padding-left: 2px; }
.findbox input::placeholder { color: #777; }
.findbox button { width: 17px; padding: 0 3px; background: #e1e1e1; border-left: 1px solid #aaa; display: flex; align-items: center; }
.findbox svg { width: 10px; height: 7px; fill: none; stroke: #444; overflow: visible; }
.findall { color: #888; width: 42px; margin: 0 7px 0 2px; text-align: left; white-space: nowrap; }
.match { display: flex; align-items: center; gap: 4px; width: 81px; white-space: nowrap; }
.match input { appearance: none; width: 13px; height: 13px; border: 1px solid #222; background: #fff; }
.linestyle { width: 76px; height: 15px; margin: 0 5px 0 4px; background: #fff; display: flex; align-items: center; }
.linestyle i { flex: 1; height: 2px; background: #3a3a38; }
.spin { display: flex; width: 82px; height: 22px; border: 1px solid #999; background: #fff; }
.spin input { flex: 1; min-width: 0; padding-left: 2px; }
.spin span { width: 15px; display: flex; flex-direction: column; }
.spin button { flex: 1; border: 1px solid #b0b0b0; background: #eee; display: grid; place-items: center; }
.spin svg { width: 6px; height: 4px; }
.fillbtn { display: flex; align-items: center; gap: 2px; margin: 0 7px 0 8px; }
.fillbtn .ico { width: 16px; height: 18px; }
.fillbtn i { width: 61px; height: 12px; background: #729fcf; border: 1px solid #8a9cae; }
.far { margin-left: 16px; }

/* Status bar */
.status { height: 22px; flex: none; display: flex; align-items: center; background: #f0f0f0; border-top: 1px solid #a0a0a0; }
.status > span { height: 18px; display: flex; align-items: center; border-right: 1px solid #b0b0b0; white-space: nowrap; padding-left: 9px; }
.status svg { fill: none; flex: none; }
.status .k { stroke: #3a3a38; }
.rs { stroke: #d0312d; }
.s-save { width: 32px; }
.s-save svg { margin-left: 3px; }
.s-page { width: 126px; }
.s-words { width: 179px; }
.s-style { width: 163px; }
.s-lang { flex: 1; }
.s-a { width: 69px; }
.s-ins { width: 30px; }
.s-b { width: 30px; }
.status > .s-pos { width: 118px; gap: 6px; border: 0; }
.s-size { width: 124px; gap: 4px; }
.status > .s-views { width: 78px; padding-left: 12px; }
.s-zoom { width: 145px; gap: 3px; }
.s-zoom button { width: 11px; height: 11px; }
.s-zoom svg { display: block; width: 11px; height: 11px; stroke: #333; stroke-width: 2; }
.s-zoom input { appearance: none; width: 101px; height: 12px; background: linear-gradient(#777, #777) 0 50% / 100% 1px no-repeat, linear-gradient(#777, #777) 22px 50% / 1px 6px no-repeat; }
.s-zoom input::-webkit-slider-thumb { appearance: none; width: 5px; height: 12px; background: #f0f0f0; border: 1px solid #333; }
.status > .s-pct { width: 45px; padding-left: 7px; border: 0; }
```
